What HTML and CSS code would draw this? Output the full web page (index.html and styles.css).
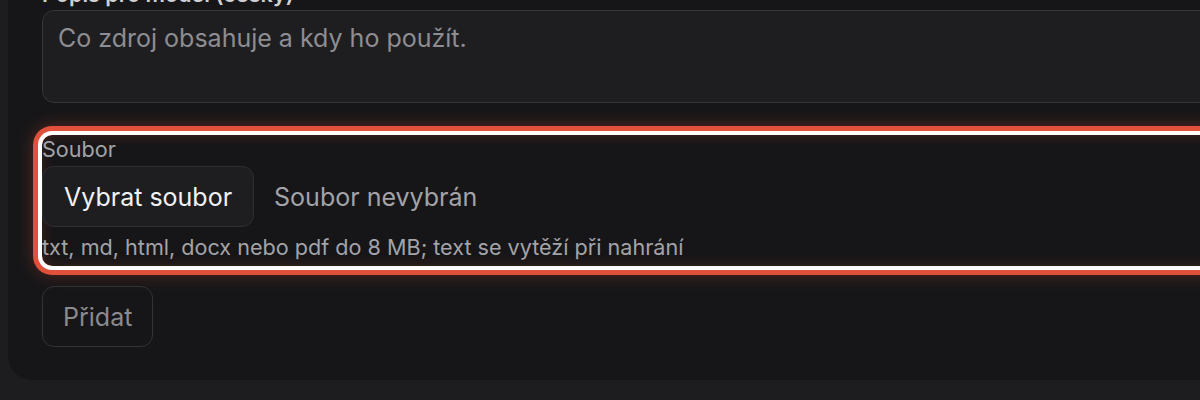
FILE: index.html
```html
<!DOCTYPE html>
<html lang="cs">
<head>
<meta charset="utf-8">
<link rel="stylesheet" href="styles.css">
</head>
<body>
<div class="panel">
  <div class="field first">
    <label class="label">Popis pro model (česky)</label>
    <div class="textarea">Co zdroj obsahuje a kdy ho použít.</div>
  </div>
  <div class="field file highlight">
    <label class="label">Soubor</label>
    <div class="file-row">
      <span class="file-btn">Vybrat soubor</span>
      <span class="file-name">Soubor nevybrán</span>
    </div>
    <div class="hint">txt, md, html, docx nebo pdf do 8 MB; text se vytěží při nahrání</div>
  </div>
  <div class="actions">
    <button class="add-btn">Přidat</button>
  </div>
</div>
</body>
</html>
```
FILE: styles.css
```css
* { box-sizing: border-box; }
html, body { margin: 0; padding: 0; }
body {
  background: #1d1d20;
  font-family: Inter, "Noto Sans", sans-serif;
  width: 1200px;
  height: 400px;
  overflow: hidden;
}
.panel {
  margin-left: 8px;
  margin-top: -46px;
  width: 1300px;
  background: #161618;
  border-radius: 24px;
  padding: 26px 34px 33px 34px;
  display: flex;
  flex-direction: column;
}
.label {
  display: block;
  font-size: 21.6px;
  line-height: 28px;
  color: #a3a3a8;
  font-weight: 500;
}
.first .label { color: #d0d0d4; font-weight: 600; }
.textarea {
  margin-top: 2px;
  height: 93px;
  border: 1.5px solid #35353a;
  border-radius: 12px;
  background: #1e1e21;
  padding: 11px 15px;
  font-size: 25px;
  line-height: 32px;
  color: #8d8d92;
}
.field.file {
  margin-top: 32px;
  padding-top: 1px;
}
.highlight {
  border-radius: 10px;
  box-shadow:
    inset 0 0 14px rgba(225, 80, 55, 0.22),
    0 0 0 4px #ffffff,
    0 0 0 9px #e0503a,
    0 0 18px 8px rgba(225, 80, 55, 0.35);
}
.file .label { font-weight: 400; line-height: 26px; }
.file-row {
  display: flex;
  align-items: center;
  gap: 20px;
  margin-top: 4px;
}
.file-btn {
  display: inline-flex;
  align-items: center;
  height: 61px;
  padding: 0 21px;
  background: #1e1e21;
  border: 1.5px solid #2f2f33;
  border-radius: 12px;
  font-size: 25px;
  color: #f2f2f4;
}
.file-name {
  font-size: 25px;
  color: #a3a3a8;
}
.hint {
  font-size: 21.6px;
  line-height: 28px;
  color: #a3a3a8;
  margin-top: 6px;
  padding-bottom: 5px;
}
.actions {
  margin-top: 20px;
  display: flex;
}
.add-btn {
  font-family: inherit;
  height: 61px;
  padding: 0 20px;
  background: transparent;
  border: 1.5px solid #333337;
  border-radius: 12px;
  font-size: 25px;
  color: #8a8a8f;
}
```
